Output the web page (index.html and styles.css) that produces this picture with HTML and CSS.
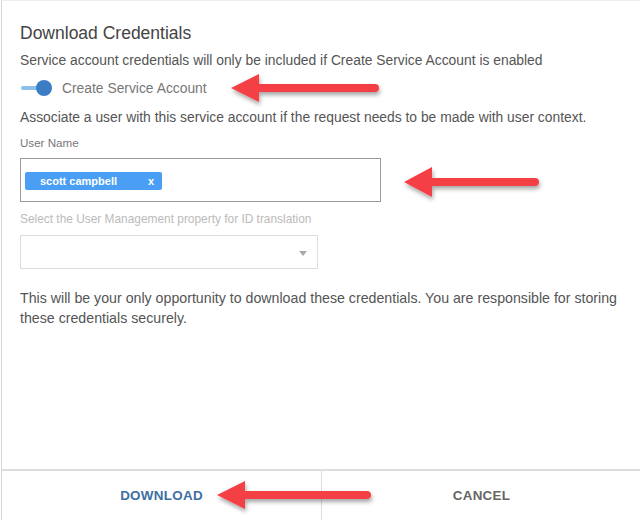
FILE: index.html
```html
<!DOCTYPE html>
<html>
<head>
<meta charset="utf-8">
<link rel="stylesheet" href="styles.css">
</head>
<body>
<div class="panel">
  <div class="content">
    <h1 class="title">Download Credentials</h1>
    <p class="desc">Service account credentials will only be included if Create Service Account is enabled</p>
    <div class="toggle-row">
      <span class="toggle"><span class="track"></span><span class="knob"></span></span>
      <span class="toggle-label">Create Service Account</span>
    </div>
    <p class="desc assoc">Associate a user with this service account if the request needs to be made with user context.</p>
    <div class="label">User Name</div>
    <div class="input">
      <span class="chip"><span class="chip-text">scott campbell</span><span class="chip-x">x</span></span>
    </div>
    <div class="label disabled">Select the User Management property for ID translation</div>
    <div class="select"><span class="caret"></span></div>
    <p class="notice">This will be your only opportunity to download these credentials. You are responsible for storing these credentials securely.</p>
  </div>
  <div class="footer">
    <div class="btn primary">DOWNLOAD</div>
    <div class="btn secondary">CANCEL</div>
  </div>

  <svg class="arrow a1" width="170" height="50" viewBox="0 0 170 50"><use href="#arr"/></svg>
  <svg class="arrow a2" width="156" height="50" viewBox="0 0 156 50"><use href="#arr2"/></svg>
  <svg class="arrow a3" width="176" height="50" viewBox="0 0 176 50"><use href="#arr3"/></svg>

  <svg width="0" height="0" class="defs">
    <defs>
      <filter id="sh" x="-20%" y="-50%" width="140%" height="200%">
        <feDropShadow dx="1" dy="3" stdDeviation="2" flood-color="#000" flood-opacity="0.35"/>
      </filter>
      <g id="arr" filter="url(#sh)">
        <line x1="24" y1="21" x2="146" y2="21" stroke="#f44044" stroke-width="8" stroke-linecap="round"/>
        <polygon points="2,21 30,7 30,35" fill="#f44044"/>
      </g>
      <g id="arr2" filter="url(#sh)">
        <line x1="24" y1="21" x2="133" y2="21" stroke="#f44044" stroke-width="8" stroke-linecap="round"/>
        <polygon points="2,21 30,6 30,36" fill="#f44044"/>
      </g>
      <g id="arr3" filter="url(#sh)">
        <line x1="24" y1="21" x2="152" y2="21" stroke="#f44044" stroke-width="8" stroke-linecap="round"/>
        <polygon points="2,21 30,7 30,35" fill="#f44044"/>
      </g>
    </defs>
  </svg>
</div>
</body>
</html>
```

FILE: styles.css
```css
* { box-sizing: border-box; }
html, body { margin: 0; padding: 0; background: #fff; }
body {
  font-family: "Liberation Sans", Arial, sans-serif;
  color: #555;
}
.panel {
  position: relative;
  width: 640px;
  height: 520px;
  margin-left: 1px;
  border-left: 1px solid #d6d6d6;
  border-top: 1px solid #eee;
  display: flex;
  flex-direction: column;
}
.content {
  flex: 1;
  padding: 22px 0 0 18px;
}
.title {
  margin: 0;
  font-size: 17.5px;
  font-weight: normal;
  line-height: 20px;
  color: #444;
}
.desc {
  margin: 9px 0 0;
  font-size: 13.85px;
  line-height: 16px;
  color: #555;
}
.toggle-row {
  display: flex;
  align-items: center;
  height: 20px;
  margin-top: 10px;
}
.toggle {
  position: relative;
  width: 31px;
  height: 16px;
  margin-right: 11px;
}
.track {
  position: absolute;
  left: 1px;
  top: 6px;
  width: 26px;
  height: 4px;
  border-radius: 2px;
  background: #8cc0ea;
}
.knob {
  position: absolute;
  left: 16px;
  top: 0;
  width: 16px;
  height: 16px;
  border-radius: 50%;
  background: #3b7dc4;
}
.toggle-label {
  font-size: 13.85px;
  color: #777;
}
.assoc { margin-top: 11px; }
.label {
  margin-top: 11px;
  font-size: 11.6px;
  line-height: 14px;
  color: #777;
}
.label.disabled {
  color: #bbb;
  margin-top: 10px;
  font-size: 11.9px;
}
.input {
  margin-top: 8px;
  width: 361px;
  height: 44px;
  border: 1px solid #9a9a9a;
  padding: 13px 0 0 4px;
}
.chip {
  display: flex;
  align-items: center;
  justify-content: space-between;
  width: 137px;
  height: 18px;
  padding: 0 8px 0 15px;
  border-radius: 2px;
  background: #4a9ff5;
  color: #fff;
  font-size: 11px;
  font-weight: bold;
}
.select {
  position: relative;
  margin-top: 9px;
  width: 298px;
  height: 34px;
  border: 1px solid #ddd;
}
.caret {
  position: absolute;
  right: 10px;
  top: 15px;
  width: 0;
  height: 0;
  border-left: 4px solid transparent;
  border-right: 4px solid transparent;
  border-top: 5px solid #aaa;
}
.notice {
  margin: 19px 0 0;
  width: 605px;
  font-size: 14.2px;
  line-height: 20px;
  color: #555;
}
.footer {
  display: flex;
  height: 51px;
  border-top: 2px solid #ddd;
}
.btn {
  flex: 1;
  display: flex;
  align-items: center;
  justify-content: center;
  font-size: 13.4px;
  font-weight: bold;
  letter-spacing: 0.3px;
}
.btn.primary {
  color: #3e6fa1;
  border-right: 1px solid #ddd;
  flex: 0 0 320px;
}
.btn.secondary { color: #666; }
.arrow { position: absolute; overflow: visible; }
.a1 { left: 227px; top: 66px; }
.a2 { left: 400px; top: 160px; }
.a3 { left: 213px; top: 473px; }
.defs { position: absolute; }
```
